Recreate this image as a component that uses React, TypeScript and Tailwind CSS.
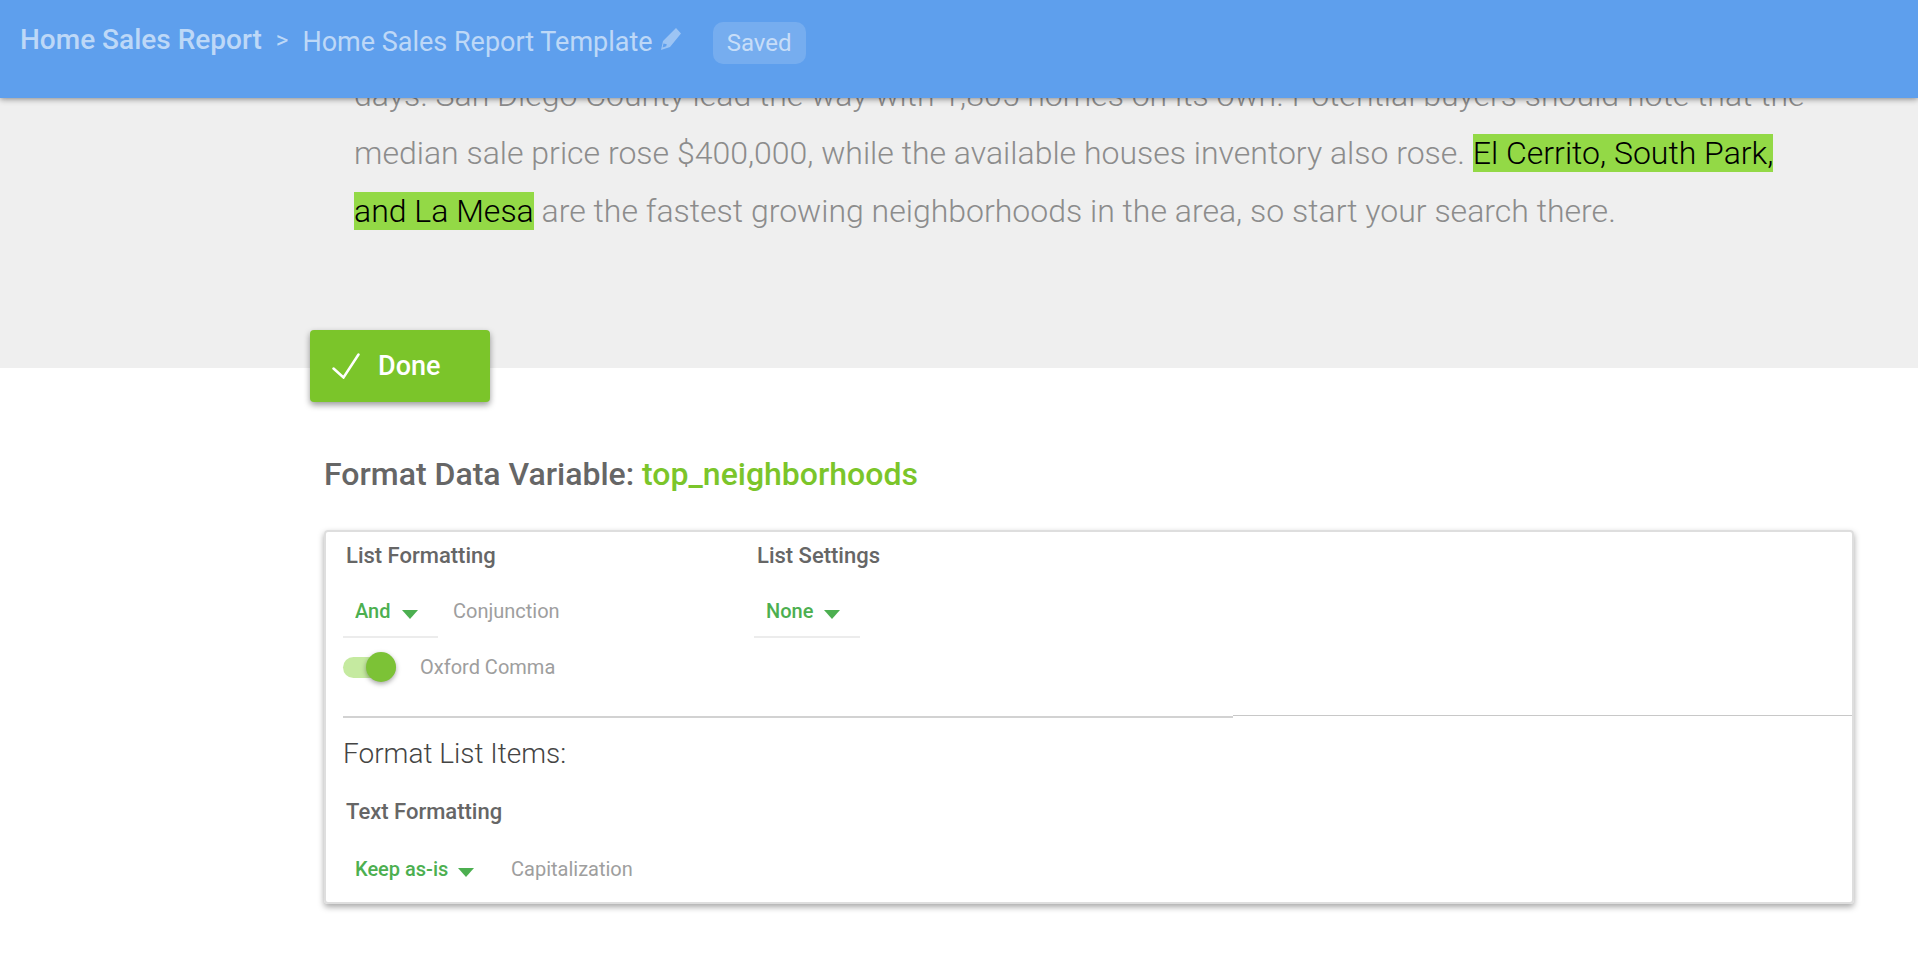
import type { ReactNode } from "react";

function Dropdown({ id, label, options, className }: { id: string; label: string; options: string[]; className: string }) {
  return (
    <div className={`grid h-12 items-center border-b-2 text-xl ${className}`}>
      <select
        id={id}
        aria-label={label}
        className="col-start-1 row-start-1 h-full w-full cursor-pointer appearance-none bg-transparent pb-1 pl-3 font-medium text-[#4caf50] outline-none"
      >
        {options.map((option) => (
          <option key={option}>{option}</option>
        ))}
      </select>
      <svg viewBox="0 0 16 9" className="pointer-events-none col-start-1 row-start-1 mt-0.5 mr-5 h-[9px] w-4 justify-self-end fill-[#4caf50]">
        <path d="M0 0h16L8 9z" />
      </svg>
    </div>
  );
}

function GroupTitle({ children }: { children: ReactNode }) {
  return <h3 className="pl-[3px] text-[22px] leading-8 font-medium text-[#666]">{children}</h3>;
}

function Header() {
  return (
    <header className="relative z-10 flex h-[98px] items-start bg-[#5e9fed] px-5 pt-[22px] text-white/60 shadow-[0_1px_6px_rgba(0,0,0,0.45)]">
      <nav className="flex items-start leading-9">
        <a href="#report" className="text-[28px] font-medium">Home Sales Report</a>
        <span className="mx-3.5 pt-0.5 text-2xl">&gt;</span>
        <span className="pt-0.5 text-[27px]">Home Sales Report Template</span>
      </nav>
      <button type="button" aria-label="Rename" className="mt-1.5 ml-2">
        <svg viewBox="0 0 20 22" className="h-[22px] w-5">
          <path d="M15 0l5 5.500L9 19 0 22l2-9zM2.500 15.500l-.9 4 3.600-1.300.6-2z" fill="currentColor" fillRule="evenodd" opacity=".65" />
        </svg>
      </button>
      <span className="ml-8 rounded-[10px] bg-white/15 px-3.5 text-2xl leading-[42px]">Saved</span>
    </header>
  );
}

export default function App() {
  return (
    <div className="min-h-screen bg-white font-['Roboto',sans-serif]">
      <Header />
      <section className="-mt-8 bg-[#efefef] pr-[92px] pb-32 pl-[354px]">
        <p className="text-[32px] leading-[58px] font-light text-[#8c8c8c]">
          days. San Diego County lead the way with 1,805 homes on its own. Potential buyers should note that the median
          sale price rose $400,000, while the available houses inventory also rose.{" "}
          <mark className="bg-[#93d946] text-black">El Cerrito, South Park, and La Mesa</mark> are the fastest growing
          neighborhoods in the area, so start your search there.
        </p>
      </section>

      <main className="-mt-[38px] pr-16 pb-14 pl-[310px]">
        <button
          type="button"
          className="relative flex h-[72px] w-[180px] items-center gap-[18px] rounded bg-[#7bc52a] pl-[22px] text-[27px] font-medium text-white shadow-[0_3px_6px_rgba(0,0,0,0.4)]"
        >
          <svg viewBox="0 0 28 26" className="h-[26px] w-7" fill="none" stroke="currentColor" strokeWidth="2.500" strokeLinecap="round">
            <path d="M1.500 15.500L11.500 24.500 26.500 1.500" />
          </svg>
          Done
        </button>

        <div className="pl-[14px]">
          <h2 className="mt-[50px] text-[32px] leading-[44px] font-medium text-[#666]">
            Format Data Variable: <span className="text-[#7bc52a]">top_neighborhoods</span>
          </h2>

          <div className="mt-[34px] rounded border-2 border-[#dedede] pb-1.5 pl-[17px] shadow-[0_3px_6px_rgba(0,0,0,0.35)]">
            <div className="flex pt-2">
              <div className="w-[411px]">
                <GroupTitle>List Formatting</GroupTitle>
                <div className="mt-[18px] flex items-center">
                  <Dropdown id="conjunction" label="Conjunction" options={["And", "Or"]} className="w-[95px] border-[#ececec]" />
                  <label htmlFor="conjunction" className="ml-[15px] pb-1.5 text-xl text-[#9e9e9e]">Conjunction</label>
                </div>
                <label className="mt-3 flex h-[34px] cursor-pointer items-center gap-6 text-xl text-[#9e9e9e]">
                  <input type="checkbox" role="switch" defaultChecked className="peer sr-only" />
                  <span className="flex h-[21px] w-[53px] items-center justify-end rounded-full bg-[#c5eaa0]">
                    <span className="size-[30px] rounded-full bg-[#7cc236] shadow-[0_2px_5px_rgba(0,0,0,0.35)]" />
                  </span>
                  Oxford Comma
                </label>
              </div>
              <div>
                <GroupTitle>List Settings</GroupTitle>
                <div className="mt-[18px]">
                  <Dropdown id="settings" label="List Settings" options={["None"]} className="w-[106px] border-[#ececec]" />
                </div>
              </div>
            </div>

            <div className="mt-[31px] flex items-start">
              <div className="mt-px h-[2px] w-[890px] bg-[#d2d2d2]" />
              <div className="h-px flex-1 bg-[#c8c8c8]" />
            </div>

            <h3 className="mt-4 text-[28px] leading-10 font-light text-[#444]">Format List Items:</h3>
            <div className="mt-[22px]">
              <GroupTitle>Text Formatting</GroupTitle>
            </div>
            <div className="mt-5 flex items-center">
              <Dropdown id="capitalization" label="Capitalization" options={["Keep as-is", "Uppercase", "Lowercase"]} className="w-[151px] border-transparent" />
              <label htmlFor="capitalization" className="ml-[17px] pb-1.5 text-xl text-[#9e9e9e]">Capitalization</label>
            </div>
          </div>
        </div>
      </main>
    </div>
  );
}
